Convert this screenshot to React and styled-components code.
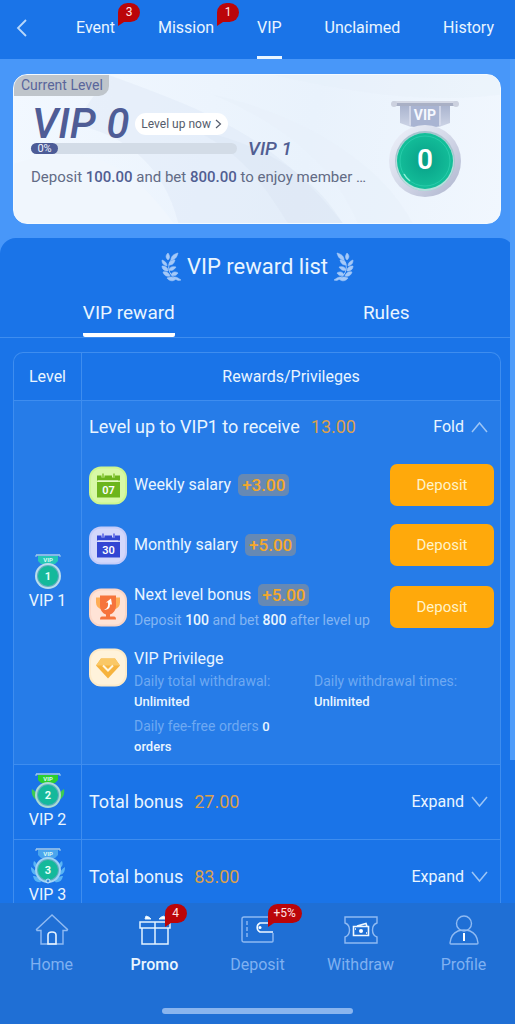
import React, { useState } from "react";
import styled, { createGlobalStyle } from "styled-components";

const topTabs = [
	{ name: "Event", badge: "3" },
	{ name: "Mission", badge: "1" },
	{ name: "VIP" },
	{ name: "Unclaimed" },
	{ name: "History" },
];

const salaries = [
	{ name: "Weekly salary", bonus: "+3.00", icon: <CalendarIcon day="07" /> },
	{ name: "Monthly salary", bonus: "+5.00", icon: <CalendarIcon day="30" monthly /> },
	{ name: "Next level bonus", bonus: "+5.00", icon: <TrophyIcon />, deposit: "100", bet: "800" },
];

const lockedLevels = [
	{ level: 2, total: "27.00" },
	{ level: 3, total: "83.00" },
];

const bottomTabs = [
	{ name: "Home", icon: <HomeIcon /> },
	{ name: "Promo", icon: <GiftIcon />, badge: "4" },
	{ name: "Deposit", icon: <WalletIcon />, badge: "+5%" },
	{ name: "Withdraw", icon: <TicketIcon /> },
	{ name: "Profile", icon: <ProfileIcon /> },
];

export default function App() {
	const [section, setSection] = useState("VIP reward");

	return (
		<>
			<GlobalStyle />
			<Page>
				<Header />
				<Main>
					<Scroller>
						<LevelCard progress={0} />
						<Panel>
							<PanelTitle>
								<Laurel />
								VIP reward list
								<Laurel flip />
							</PanelTitle>
							<Sections>
								{["VIP reward", "Rules"].map((name) => (
									<SectionTab key={name} $active={section === name} onClick={() => setSection(name)}>
										<span>{name}</span>
									</SectionTab>
								))}
							</Sections>
							<RewardTable />
						</Panel>
					</Scroller>
					<ScrollThumb />
				</Main>
				<BottomBar />
			</Page>
		</>
	);
}

function Header() {
	return (
		<TopBar>
			<BackButton aria-label="Back">
				<svg width="12" height="18" viewBox="0 0 12 18" fill="none" stroke="#b9d8fb" strokeWidth="1.8">
					<path d="M10 1 2 9l8 8" />
				</svg>
			</BackButton>
			<TopNav>
				{topTabs.map((tab) => (
					<TopLink key={tab.name} href="#" $active={tab.name === "VIP"}>
						{tab.name}
						{tab.badge && <TopBadge>{tab.badge}</TopBadge>}
					</TopLink>
				))}
			</TopNav>
		</TopBar>
	);
}

function LevelCard({ progress }) {
	return (
		<Card>
			<CardBackdrop viewBox="0 0 488 150" preserveAspectRatio="none">
				<path d="M0 90C90 60 130 110 160 150H0Z" fill="#f0f6fd" />
				<path d="M95 0C190 35 260 60 330 150H165C150 90 110 60 60 50Z" fill="#dce7f4" opacity=".4" />
				<path d="M180 55C250 70 300 100 330 150H275C250 110 230 80 180 55Z" fill="#d5e1f0" opacity=".25" />
				<path d="M260 0C330 15 400 30 488 20V0Z" fill="#e3edf8" opacity=".3" />
				<path d="M200 20C290 40 370 90 400 150H345C320 90 270 50 200 20Z" fill="#e8f0fa" opacity=".6" />
			</CardBackdrop>
			<CardInfo>
				<CurrentTag>Current Level</CurrentTag>
				<LevelRow>
					<LevelName>VIP 0</LevelName>
					<LevelUp>
						Level up now
						<svg width="7" height="10" viewBox="0 0 7 10" fill="none" stroke="#555c6c" strokeWidth="1.2">
							<path d="m1 1 4.500 4L1 9" />
						</svg>
					</LevelUp>
				</LevelRow>
				<ProgressRow>
					<Track role="progressbar" aria-label="Level progress" aria-valuenow={progress}>
						<Fill style={{ width: `${progress}%` }}>{progress}%</Fill>
					</Track>
					<NextLevel>VIP 1</NextLevel>
				</ProgressRow>
				<CardNote>
					Deposit <b>100.00</b> and bet <b>800.00</b> to enjoy member …
				</CardNote>
			</CardInfo>
			<BigMedal />
		</Card>
	);
}

function RewardTable() {
	return (
		<Table>
			<thead>
				<tr>
					<LevelHead>Level</LevelHead>
					<Head>Rewards/Privileges</Head>
				</tr>
			</thead>
			<tbody>
				<Row $open>
					<LevelCell>
						<Medal level={1} />
						<LevelLabel>VIP 1</LevelLabel>
					</LevelCell>
					<Cell>
						<Summary $open>
							<span>Level up to VIP1 to receive</span>
							<Amount>13.00</Amount>
							<Toggle>
								Fold
								<Chevron up />
							</Toggle>
						</Summary>
						<Rewards>
							{salaries.map((item) => (
								<Reward key={item.name}>
									{item.icon}
									<RewardText>
										<RewardName>
											{item.name}
											<Bonus>{item.bonus}</Bonus>
										</RewardName>
										{item.deposit && (
											<Hint>
												Deposit <b>{item.deposit}</b> and bet <b>{item.bet}</b> after level up
											</Hint>
										)}
									</RewardText>
									<DepositButton>Deposit</DepositButton>
								</Reward>
							))}
							<Privilege>
								<DiamondIcon />
								<RewardText>
									<RewardName>VIP Privilege</RewardName>
									<Limits>
										<Limit>
											Daily total withdrawal:
											<br />
											<b>Unlimited</b>
										</Limit>
										<Limit>
											Daily withdrawal times:
											<br />
											<b>Unlimited</b>
										</Limit>
										<Limit>
											Daily fee-free orders <b>0 orders</b>
										</Limit>
									</Limits>
								</RewardText>
							</Privilege>
						</Rewards>
					</Cell>
				</Row>
				{lockedLevels.map((row) => (
					<Row key={row.level}>
						<LevelCell>
							<Medal level={row.level} />
							<LevelLabel>VIP {row.level}</LevelLabel>
						</LevelCell>
						<Cell>
							<Summary>
								<span>Total bonus</span>
								<Amount>{row.total}</Amount>
								<Toggle>
									Expand
									<Chevron />
								</Toggle>
							</Summary>
						</Cell>
					</Row>
				))}
			</tbody>
		</Table>
	);
}

function BottomBar() {
	return (
		<Footer>
			<BottomNav>
				{bottomTabs.map((tab) => (
					<BottomLink key={tab.name} href="#" $active={tab.name === "Promo"}>
						<IconBox>
							{tab.icon}
							{tab.badge && <IconBadge>{tab.badge}</IconBadge>}
						</IconBox>
						{tab.name}
					</BottomLink>
				))}
			</BottomNav>
			<HomeIndicator />
		</Footer>
	);
}

/* drawings */

function Chevron({ up }) {
	return (
		<svg width="17" height="12" viewBox="0 0 17 12" fill="none" stroke="#9cc5f6" strokeWidth="1.500">
			<path d={up ? "m1 11 7.500-9L16 11" : "m1 1 7.500 9L16 1"} />
		</svg>
	);
}

function Laurel({ flip }) {
	return (
		<svg width="20" height="30" viewBox="0 0 20 30" fill="#a5c9f8" stroke="#a5c9f8" strokeWidth=".6">
			<g transform={flip ? "matrix(-1 0 0 1 20 0)" : undefined}>
				<path d="M13 5C6 10 5 22 16 27" fill="none" strokeWidth="1" />
				<path d="M10 8c0-4 3-6 7-7-1 4-3 7-7 7Z" />
				<path d="M7 8C4 5 5 3 7 1c2 3 2 5 0 7Z" />
				<path d="M8 13c0-4 3-5 6-5-1 4-3 5-6 5Z" />
				<path d="M6 14c-4-1-5-3-5-6 3 1 5 3 5 6Z" />
				<path d="M8 18c1-3 3-4 7-3-2 3-4 4-7 3Z" />
				<path d="M7 19c-4 0-6-2-6-5 4 0 6 2 6 5Z" />
				<path d="M10 23c1-3 4-4 7-2-2 3-4 3-7 2Z" />
				<path d="M9 24c-4 1-6-1-7-4 4-1 6 1 7 4Z" />
				<path d="M15 27c-3 3-7 2-9-1 4-2 7-1 9 1Z" />
				<path d="M13 25c3 0 4 1 7 3-3 1-5 0-7-3Z" />
			</g>
		</svg>
	);
}

function BigMedal() {
	return (
		<MedalBox viewBox="0 0 74 98">
			<defs>
				<linearGradient id="metal" x1="0" y1="0" x2="1" y2="1">
					<stop offset="0" stopColor="#f0f3fb" />
					<stop offset=".5" stopColor="#d3d8e8" />
					<stop offset="1" stopColor="#adb4cd" />
				</linearGradient>
				<linearGradient id="ribbon" x1="0" y1="0" x2="0" y2="1">
					<stop offset="0" stopColor="#a9b3ce" />
					<stop offset="1" stopColor="#cdd4e6" />
				</linearGradient>
				<radialGradient id="gem">
					<stop offset="0" stopColor="#079f87" />
					<stop offset="1" stopColor="#14bf9a" />
				</radialGradient>
			</defs>
			<path d="M12 5h50v18l-11 4H23l-11-4Z" fill="url(#ribbon)" />
			<path d="M23 6h28v20l-14 4-14-4Z" fill="#a9b4d2" />
			<path d="M22 6v19M52 6v19" stroke="#d8ddec" strokeWidth="1.500" />
			<rect x="4" y="1" width="66" height="5" rx="2.500" fill="#a9b0c5" />
			<rect x="5" y="1" width="64" height="2" rx="1" fill="#d4d8e4" />
			<circle cx="6" cy="4" r="3" fill="#ccd1df" />
			<circle cx="68" cy="4" r="3" fill="#ccd1df" />
			<text x="37" y="20" textAnchor="middle" fontSize="14" fontWeight="700" fill="#f6f8ff">
				VIP
			</text>
			<circle cx="37" cy="61" r="36" fill="url(#metal)" />
			<circle cx="37" cy="61" r="30" fill="#a9c4cf" />
			<circle cx="37" cy="62" r="29" fill="#b5e0dc" />
			<circle cx="37" cy="61" r="28" fill="url(#gem)" />
			<circle cx="37" cy="61" r="25" fill="none" stroke="#30d1b0" strokeWidth="1" opacity=".7" />
			<path d="M16 74q2 4 6 7" fill="none" stroke="#8df0d8" strokeWidth="1.500" />
			<text x="37" y="69" textAnchor="middle" fontSize="28" fontWeight="600" fill="#fff">
				0
			</text>
		</MedalBox>
	);
}

function Medal({ level }) {
	const ribbon = { 1: "#25c7b6", 2: "#2bd02f", 3: "#4aa5ee" }[level];
	const rim = { 1: "#b9ddec", 2: "#a9dcd3", 3: "#9fd3f5" }[level];
	const wing = { 2: "#3ccb52", 3: "#58b4f5" }[level];
	return (
		<svg width="34" height="36" viewBox="0 0 34 36">
			<path d="M7 2h20v5l-3 3H10L7 7Z" fill={ribbon} />
			<path d="M5 1h24" stroke="#a9cdea" strokeWidth="1.500" />
			<path d="M5 1v2M29 1v2" stroke="#a9cdea" />
			<text x="17" y="8" textAnchor="middle" fontSize="6" fontWeight="700" fill="#d8fbf4">
				VIP
			</text>
			{level === 2 && (
				<g fill={wing}>
					<path d="M6 27c-4-2-6-6-5-11 3 2 5 4 6 7ZM28 27c4-2 6-6 5-11-3 2-5 4-6 7Z" />
				</g>
			)}
			{level === 3 && (
				<g fill={wing}>
					<path d="M5 20c-3-2-3-4-2-7 3 2 3 4 2 7ZM29 20c3-2 3-4 2-7-3 2-3 4-2 7Z" />
					<path d="M5 27c-4-1-5-4-5-8 3 2 5 4 5 8ZM29 27c4-1 5-4 5-8-3 2-5 4-5 8Z" />
					<path d="M10 34c-4 1-7-1-8-6 4 0 7 2 8 6ZM24 34c4 1 7-1 8-6-4 0-7 2-8 6Z" />
				</g>
			)}
			<circle cx="17" cy="22" r="13" fill={rim} />
			<circle cx="17" cy="22" r="11" fill="#5faebf" />
			<circle cx="17" cy="22" r="10" fill="#14b99b" />
			{level === 3 && <circle cx="17" cy="33" r="2" fill="#3a8de0" stroke="#c9e8fb" />}
			<text x="17" y="26" textAnchor="middle" fontSize="11" fontWeight="700" fill="#e6fff8">
				{level}
			</text>
		</svg>
	);
}

function CalendarIcon({ day, monthly }) {
	const color = monthly ? "#3346d3" : "#6db51c";
	const light = monthly ? "#737bea" : "#97cf4d";
	return (
		<Tile viewBox="0 0 38 38">
			<rect width="38" height="38" rx="12" fill={monthly ? "#c5ccf8" : "#cdf68f"} />
			<rect x="2" y="2" width="34" height="34" rx="10" fill={monthly ? "#d3d7fb" : "#d8f9a6"} />
			<path d="M13 7h2v4h-2zM24 7h2v4h-2z" fill={light} />
			<path d="M8 9h4.500v2h3V9h7.500v2h3V9H31v5H8Z" fill={color} />
			<path d="M8 15.500h23V31H8Z" fill={color} />
			<path d="M9 14.500h20" stroke={monthly ? "#e9ebff" : "#effbd8"} />
			<text x="19.500" y="27" textAnchor="middle" fontSize="11" fontWeight="600" fill="#fff">
				{day}
			</text>
		</Tile>
	);
}

function TrophyIcon() {
	return (
		<Tile viewBox="0 0 38 38">
			<rect width="38" height="38" rx="12" fill="#fbd6c6" />
			<rect x="2" y="2" width="34" height="34" rx="10" fill="#ffe3d6" />
			<path d="M12 9H7v5q0 6 7 7M26 9h5v5q0 6-7 7" fill="#ffad55" />
			<path d="M11 7h16v10c0 5-3 8-6 9v2h4q2 0 2 3H11q0-3 2-3h4v-2c-3-1-6-4-6-9Z" fill="#f6743c" />
			<path d="M15 21q5-1 4-7h-2l5-4 1 6h-2q0 6-6 5Z" fill="#fff" />
		</Tile>
	);
}

function DiamondIcon() {
	return (
		<Tile viewBox="0 0 38 38">
			<rect width="38" height="38" rx="12" fill="#feebc8" />
			<rect x="2" y="2" width="34" height="34" rx="10" fill="#fff3db" />
			<path d="M12 10h14l5 7-12 13L7 17Z" fill="#f6b33d" />
			<path d="M12 10h14l5 7H7Z" fill="#fac866" />
			<path d="m14 17 5 5 5-5" fill="none" stroke="#fff6df" strokeWidth="2" />
		</Tile>
	);
}

function HomeIcon() {
	return (
		<svg width="34" height="32" viewBox="0 0 34 32" fill="none" stroke="#8fbaf2" strokeWidth="1.400">
			<path d="M17 1 1.500 15.500 2 16.500h4V30h22V16.500h4l.5-1Z" />
			<path d="M13 30V21q0-3 4-3t4 3v9Z" stroke="#e6f3ff" strokeWidth="1.600" />
		</svg>
	);
}

function GiftIcon() {
	return (
		<svg width="34" height="32" viewBox="0 0 34 32" fill="none" stroke="#e3f4ff" strokeWidth="1.500">
			<path d="M2 8h30v6H2ZM4 14h26v16H4ZM17 8v22" />
			<path d="M8 2q4 1 5 3H7ZM26 2q-4 1-5 3h6Z" fill="#fff" strokeWidth="1" />
		</svg>
	);
}

function WalletIcon() {
	return (
		<svg width="34" height="32" viewBox="0 0 34 32" fill="none" stroke="#8fbaf2" strokeWidth="1.400">
			<path d="M32 19v8q0 1-1 1H3q-2 0-2-2V5q0-2 2-2h28q1 0 1 2v4" />
			<path d="M6 7v17" strokeDasharray="4 2" />
			<path d="M32 9H19a5 5 0 0 0 0 9h13" stroke="#f0f8ff" strokeWidth="1.600" />
			<circle cx="19" cy="13.500" r="1.500" fill="#fff" stroke="none" />
		</svg>
	);
}

function TicketIcon() {
	return (
		<svg width="34" height="32" viewBox="0 0 34 32" fill="none" stroke="#8fbaf2" strokeWidth="1.400">
			<path d="M1 3h32v6c-6 2-6 12 0 14v6H1v-6c6-2 6-12 0-14Z" />
			<path d="M9.500 12.500h15v9h-15ZM13 12l9-2.500 1 3" stroke="#f0f8ff" strokeWidth="1.600" />
			<circle cx="17" cy="17" r="2" fill="#fff" stroke="none" />
			<path d="M11 15h1M22 19h1" stroke="#fff" />
		</svg>
	);
}

function ProfileIcon() {
	return (
		<svg width="34" height="32" viewBox="0 0 34 32" fill="none" stroke="#8fbaf2" strokeWidth="1.400">
			<circle cx="17" cy="9.500" r="7.500" />
			<path d="M11 17C6 19 3.500 24 3 29q0 1 1 1h26q1 0 1-1C30.500 24 28 19 23 17q-6-2-12 0Z" />
			<path d="M17 19v8" stroke="#fff" strokeWidth="2" />
		</svg>
	);
}

const GlobalStyle = createGlobalStyle`
	* {
		box-sizing: border-box;
	}
	body {
		margin: 0;
		font-family: Roboto, "Liberation Sans", sans-serif;
		font-size: 16px;
		line-height: 22px;
		color: #e9f5ff;
		background: #1a74e8;
	}
	a {
		color: inherit;
		text-decoration: none;
	}
	button {
		font: inherit;
		color: inherit;
		background: none;
		border: none;
		padding: 0;
		cursor: pointer;
	}
	b {
		font-weight: 500;
	}
	svg {
		display: block;
		flex-shrink: 0;
	}
`;

const Page = styled.div`
	display: flex;
	flex-direction: column;
	height: 100vh;
`;
const TopBar = styled.header`
	display: flex;
	align-items: stretch;
	height: 59px;
	padding: 0 21px 0 16px;
	background: #1a74e8;
`;
const BackButton = styled.button`
	width: 60px;
	padding-bottom: 3px;
`;
const TopNav = styled.nav`
	display: flex;
	flex: 1;
	justify-content: space-between;
`;
const TopLink = styled.a`
	position: relative;
	padding-top: 17px;
	border-bottom: 3px solid ${(props) => (props.$active ? "#e9f5ff" : "transparent")};
`;
const Badge = styled.span`
	position: absolute;
	min-width: 22px;
	padding: 0 6px;
	border-radius: 10px 10px 10px 0;
	background: #bb0509;
	color: #ffe3e3;
	font-size: 12px;
	font-weight: 400;
	line-height: 19px;
	text-align: center;

	&::after {
		content: "";
		position: absolute;
		left: 0;
		top: 100%;
		border-top: 4px solid #bb0509;
		border-right: 6px solid transparent;
	}
`;
const TopBadge = styled(Badge)`
	left: 100%;
	top: 3px;
	margin-left: 3px;
`;

const Main = styled.main`
	position: relative;
	flex: 1;
	min-height: 0;
	background: #4897f9;
`;
const Scroller = styled.div`
	height: 100%;
	overflow: auto;
	scrollbar-width: none;
`;
const ScrollThumb = styled.div`
	position: absolute;
	top: 0;
	right: 0;
	width: 5px;
	height: 83%;
	background: #4e9cfa;
`;

const Card = styled.section`
	position: relative;
	display: flex;
	justify-content: space-between;
	min-height: 150px;
	margin: 15px 14px 14px 13px;
	padding-right: 38px;
	border: 1px solid #f4faff;
	border-radius: 14px;
	overflow: hidden;
	background: linear-gradient(100deg, #f2f8ff, #e9f2fc 60%, #f1f7fe);
`;
const CardBackdrop = styled.svg`
	position: absolute;
	inset: 0;
	width: 100%;
	height: 100%;
`;
const CardInfo = styled.div`
	position: relative;
	display: flex;
	flex-direction: column;
	align-items: flex-start;
	color: #626b85;

	b {
		color: #515e92;
	}
`;
const CurrentTag = styled.div`
	padding: 0 6px 0 7px;
	border-radius: 0 0 10px 0;
	background: #bfc5cb;
	color: #5a669b;
	font-size: 14px;
	line-height: 21px;
`;
const LevelRow = styled.div`
	display: flex;
	align-items: center;
	gap: 6px;
	height: 47px;
	padding: 9px 0 0 18px;
`;
const LevelName = styled.h1`
	margin: 0;
	color: #4f5d96;
	font-size: 42px;
	font-style: italic;
	font-weight: 500;
	line-height: 38px;
`;
const LevelUp = styled.button`
	display: flex;
	align-items: center;
	gap: 4px;
	padding: 0 6px;
	border-radius: 11px;
	background: #fff;
	color: #555c6c;
	font-size: 12px;
	line-height: 22px;
`;
const ProgressRow = styled.div`
	display: flex;
	align-items: center;
	gap: 11px;
	height: 11px;
	padding-left: 17px;
`;
const Track = styled.div`
	width: 206px;
	border-radius: 6px;
	background: #d3dce7;
`;
const Fill = styled.div`
	min-width: 27px;
	border-radius: 6px;
	background: #4d5c97;
	color: #f0f3ff;
	font-size: 11px;
	line-height: 11px;
	text-align: center;
`;
const NextLevel = styled.span`
	color: #515e92;
	font-size: 19px;
	font-style: italic;
	font-weight: 500;
`;
const CardNote = styled.p`
	margin: 12px 0 0;
	padding-left: 17px;
	font-size: 15px;
	white-space: nowrap;
`;
const MedalBox = styled.svg`
	position: relative;
	width: 74px;
	height: 98px;
	margin-top: 25px;
`;

const Panel = styled.section`
	min-height: 100%;
	border-radius: 16px 16px 0 0;
	background: #1a74e8;
`;
const PanelTitle = styled.h2`
	display: flex;
	align-items: center;
	justify-content: center;
	gap: 6px;
	margin: 0;
	padding-top: 14px;
	font-size: 22px;
	font-weight: 400;
	line-height: 30px;
`;
const Sections = styled.div`
	display: flex;
	border-bottom: 1px solid #3e8def;
`;
const SectionTab = styled.button`
	flex: 1;
	height: 55px;
	font-size: 19px;
	line-height: 22px;

	span {
		display: inline-block;
		padding: 20px 0 9px;
		border-bottom: 4px solid ${(props) => (props.$active ? "#fff" : "transparent")};
		border-radius: 2px;
	}
`;

const Table = styled.table`
	width: calc(100% - 27px);
	margin: 14px 14px 20px 13px;
	border: 1px solid #3e8def;
	border-bottom: none;
	border-radius: 10px 10px 0 0;
	border-spacing: 0;
`;
const Head = styled.th`
	height: 47px;
	padding: 0;
	font-weight: 400;
`;
const LevelHead = styled(Head)`
	width: 68px;
	border-right: 1px solid #3e8def;
`;
const Row = styled.tr`
	background: ${(props) => (props.$open ? "#267ce8" : "transparent")};
`;
const Cell = styled.td`
	padding: 0 6px 0 7px;
	border-top: 1px solid #3e8def;
`;
const LevelCell = styled(Cell)`
	padding: 8px 0;
	border-right: 1px solid #3e8def;
	text-align: center;

	svg {
		margin: 0 auto;
	}
`;
const LevelLabel = styled.div`
	line-height: 22px;
`;
const Summary = styled.div`
	display: flex;
	align-items: center;
	height: ${(props) => (props.$open ? "51px" : "74px")};
	font-size: 18px;
`;
const Amount = styled.span`
	margin-left: 11px;
	color: #dba04d;
`;
const Toggle = styled.button`
	display: flex;
	align-items: center;
	gap: 7px;
	margin-left: auto;
	padding-right: 6px;
	font-size: 16px;
`;
const Rewards = styled.div`
	display: flex;
	flex-direction: column;
	gap: 18px;
	padding: 12px 0 8px;
`;
const Reward = styled.div`
	display: flex;
	align-items: center;
	gap: 7px;
`;
const Privilege = styled(Reward)`
	align-items: flex-start;
`;
const Tile = styled.svg`
	width: 38px;
	height: 39px;
`;
const RewardText = styled.div`
	flex: 1;
`;
const RewardName = styled.div`
	display: flex;
	align-items: center;
	gap: 7px;
`;
const Bonus = styled.span`
	padding: 0 4px;
	border-radius: 5px;
	background: #6689b4;
	color: #f5a82a;
	font-size: 17px;
	font-weight: 500;
`;
const Hint = styled.div`
	margin-top: 4px;
	color: #83b5f3;
	font-size: 14px;
	line-height: 20px;
	white-space: nowrap;

	b {
		color: #e9f5ff;
	}
`;
const DepositButton = styled.button`
	width: 104px;
	height: 42px;
	border-radius: 7px;
	background: #ffa90b;
	color: #fff3c9;
	font-size: 15px;
`;
const Limits = styled.div`
	display: grid;
	grid-template-columns: 1fr 1fr;
	row-gap: 5px;
	margin-top: 1px;
`;
const Limit = styled.div`
	padding-right: 12px;
	color: #6ea9f2;
	font-size: 14px;
	line-height: 20px;

	b {
		color: #e9f5ff;
		font-size: 13px;
		line-height: 18px;
	}
`;

const Footer = styled.footer`
	background: #1f6fd5;
	padding: 11px 0 10px;
`;
const BottomNav = styled.nav`
	display: flex;
`;
const BottomLink = styled.a`
	display: flex;
	flex: 1;
	flex-direction: column;
	align-items: center;
	gap: 7px;
	color: ${(props) => (props.$active ? "#e9f5ff" : "#7fb1f1")};
	font-weight: ${(props) => (props.$active ? 500 : 400)};
	line-height: 24px;
`;
const IconBox = styled.span`
	position: relative;
`;
const IconBadge = styled(Badge)`
	left: 27px;
	top: -10px;
`;
const HomeIndicator = styled.div`
	width: 37%;
	height: 6px;
	margin: 31px auto 0;
	border-radius: 3px;
	background: #8ab5ee;
`;
